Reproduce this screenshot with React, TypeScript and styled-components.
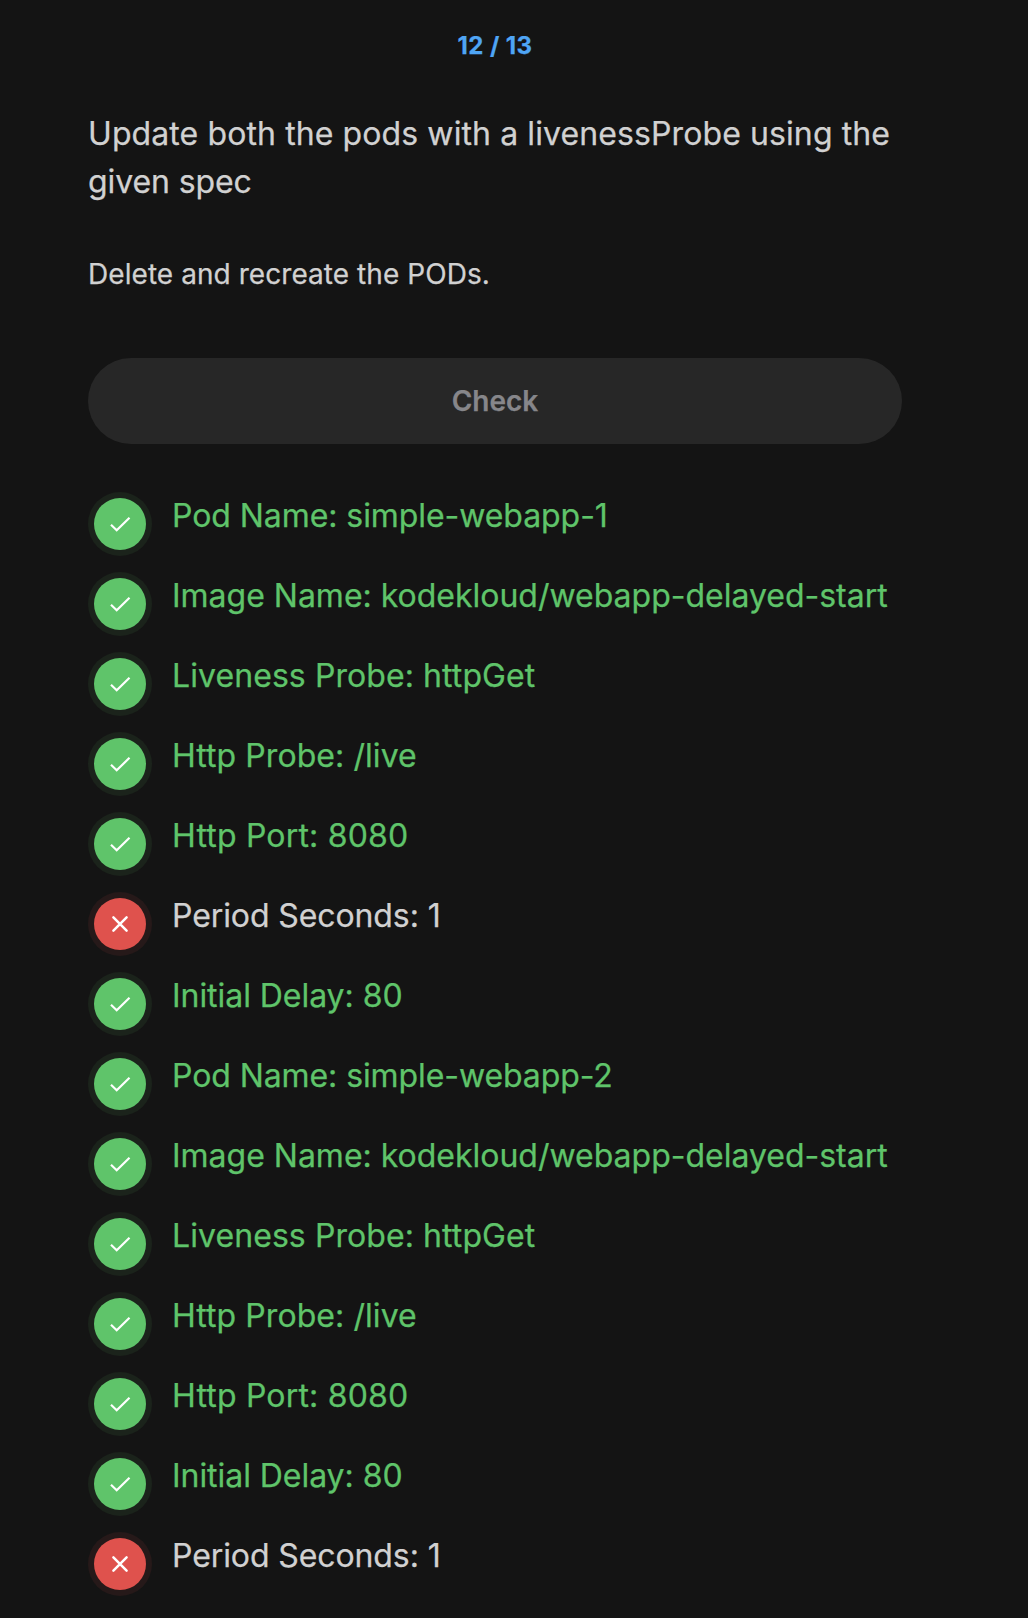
import React from 'react';
import styled, { createGlobalStyle } from 'styled-components';

const GlobalStyle = createGlobalStyle`
  * { box-sizing: border-box; }
  body { margin: 0; background: #141414; }
`;

const Page = styled.main`
  min-height: 1618px;
  padding: 30px 126px 0 88px;
  background: #141414;
  color: #d1d1d1;
  font-family: Inter, 'Liberation Sans', sans-serif;
  -webkit-text-stroke: 0.25px currentColor;
`;

const Progress = styled.div`
  height: 32px;
  line-height: 32px;
  text-align: center;
  font-size: 24px;
  font-weight: 700;
  letter-spacing: 0.4px;
  color: #4fa5f5;
`;

const Question = styled.h1`
  margin: 48px 0 0;
  font-size: 32px;
  line-height: 48px;
  font-weight: 400;
  white-space: nowrap;
`;

const QuestionLine = styled.span<{ $tracking: number }>`
  display: block;
  letter-spacing: ${(p) => p.$tracking}px;
`;

const Note = styled.p`
  margin: 48px 0 0;
  font-size: 28px;
  line-height: 40px;
  letter-spacing: 0.06px;
`;

const CheckButton = styled.button`
  display: block;
  width: 100%;
  height: 86px;
  margin: 64px 0 48px;
  border: 0;
  border-radius: 43px;
  background: #272727;
  color: #86868a;
  font: 600 28px Inter, sans-serif;
`;

const Results = styled.ul`
  display: flex;
  flex-direction: column;
  gap: 16px;
  margin: 0;
  padding: 0;
  list-style: none;
`;

const Result = styled.li<{ $passed: boolean }>`
  display: flex;
  gap: 20px;
  height: 64px;
  color: ${(p) => (p.$passed ? '#5fc46a' : '#d1d1d1')};
  font-size: 32px;
  line-height: 48px;
  white-space: nowrap;
`;

const Label = styled.span<{ $tracking: number }>`
  letter-spacing: ${(p) => p.$tracking}px;
`;

const Status = styled.span<{ $passed: boolean }>`
  display: flex;
  flex: none;
  align-items: center;
  justify-content: center;
  width: 64px;
  height: 64px;
  padding: 6px;
  border-radius: 50%;
  background: ${(p) => (p.$passed ? '#1b231b' : '#261919')};
`;

const Disc = styled.span<{ $passed: boolean }>`
  display: flex;
  align-items: center;
  justify-content: center;
  width: 52px;
  height: 52px;
  border-radius: 50%;
  background: ${(p) => (p.$passed ? '#5fc46a' : '#df524d')};
`;

const StatusIcon = ({ passed }: { passed: boolean }) => (
  <svg width="24" height="24" viewBox="0 0 24 24" fill="none" stroke="#fff" strokeWidth={passed ? 2.2 : 2.5} strokeLinecap={passed ? 'butt' : 'round'}>
    <path d={passed ? 'M3 12.8L8.7 18.3L21.5 5.8' : 'M5.4 5.4L18.6 18.6M18.6 5.4L5.4 18.6'} />
  </svg>
);

const results: { label: string; passed: boolean; tracking: number }[] = [
  { label: 'Pod Name: simple-webapp-1', passed: true, tracking: -0.07 },
  { label: 'Image Name: kodekloud/webapp-delayed-start', passed: true, tracking: -0.01 },
  { label: 'Liveness Probe: httpGet', passed: true, tracking: 0.08 },
  { label: 'Http Probe: /live', passed: true, tracking: 0.07 },
  { label: 'Http Port: 8080', passed: true, tracking: 0.18 },
  { label: 'Period Seconds: 1', passed: false, tracking: -0.1 },
  { label: 'Initial Delay: 80', passed: true, tracking: -0.05 },
  { label: 'Pod Name: simple-webapp-2', passed: true, tracking: -0.09 },
  { label: 'Image Name: kodekloud/webapp-delayed-start', passed: true, tracking: -0.01 },
  { label: 'Liveness Probe: httpGet', passed: true, tracking: 0.08 },
  { label: 'Http Probe: /live', passed: true, tracking: 0.07 },
  { label: 'Http Port: 8080', passed: true, tracking: 0.18 },
  { label: 'Initial Delay: 80', passed: true, tracking: -0.05 },
  { label: 'Period Seconds: 1', passed: false, tracking: -0.1 },
];

export default function App() {
  return (
    <Page>
      <GlobalStyle />
      <Progress>12 / 13</Progress>
      <Question>
        <QuestionLine $tracking={0.1}>Update both the pods with a livenessProbe using the</QuestionLine>
        <QuestionLine $tracking={-0.1}>given spec</QuestionLine>
      </Question>
      <Note>Delete and recreate the PODs.</Note>
      <CheckButton disabled>Check</CheckButton>
      <Results>
        {results.map((r, i) => (
          <Result key={i} $passed={r.passed}>
            <Status $passed={r.passed}>
              <Disc $passed={r.passed}>
                <StatusIcon passed={r.passed} />
              </Disc>
            </Status>
            <Label $tracking={r.tracking}>{r.label}</Label>
          </Result>
        ))}
      </Results>
    </Page>
  );
}
